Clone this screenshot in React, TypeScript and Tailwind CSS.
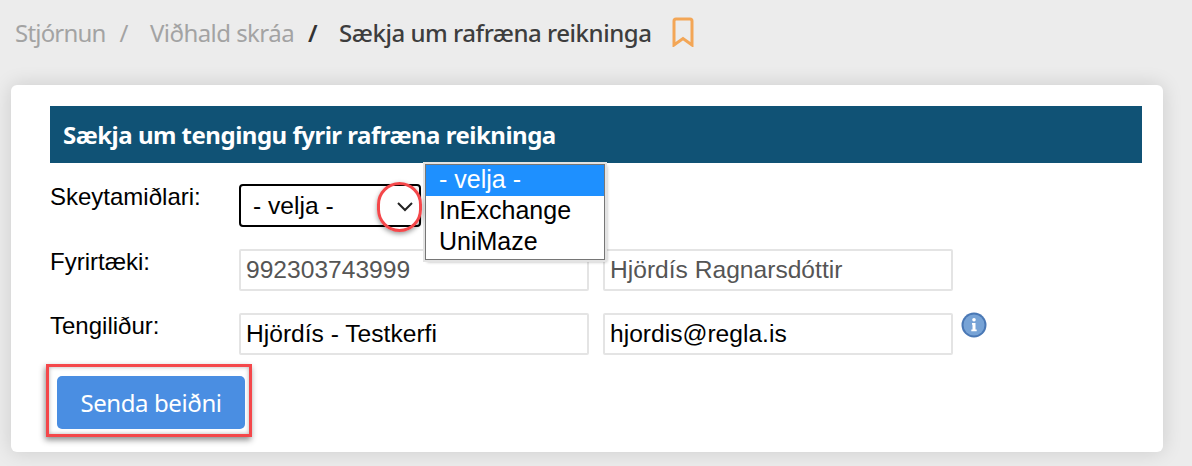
import React from 'react';

const segoe = { fontFamily: '"Noto Sans", sans-serif' };

const Field: React.FC<{ value: string; muted?: boolean }> = ({ value, muted }) => (
  <div
    className={`w-[350px] h-[42px] border-2 border-[#e4e4e4] rounded-[2px] flex items-center pl-[5px] text-[24.6px] ${
      muted ? 'text-[#555555]' : 'text-black'
    }`}
  >
    {value}
  </div>
);

const InfoIcon = () => (
  <svg width="26" height="26" viewBox="0 0 26 26">
    <circle cx="13" cy="13" r="12.5" fill="#4a78b5" />
    <circle cx="13" cy="13" r="10.5" fill="#77a3d6" />
    <circle cx="13" cy="7.800" r="1.800" fill="#ffffff" />
    <path d="M11 11h3.500v6.500h1.200v1.800h-5.400v-1.800h1.200v-4.700h-0.500z" fill="#ffffff" />
  </svg>
);

const App: React.FC = () => {
  return (
    <div className="w-[1192px] h-[466px] overflow-hidden bg-[#ececec] pl-[11px] pr-[29px]">
      {/* breadcrumb */}
      <div className="h-[85px] pl-1 pt-[17px] flex items-start text-[24px] tracking-[-0.55px] leading-[32px] text-[#a3a3a3]" style={segoe}>
        <span className="tracking-[-0.8px]">Stjórnun</span>
        <span className="ml-[14px]">/</span>
        <span className="ml-[22px]">Viðhald skráa</span>
        <span className="ml-[14px] text-[#333333] font-semibold">/</span>
        <span className="ml-[22px] text-[#3d3d3d] font-medium tracking-[-0.47px]">Sækja um rafræna reikninga</span>
        <svg className="ml-[21px]" width="22" height="30" viewBox="0 0 22 30" fill="none" stroke="#f3a656" strokeWidth="3">
          <path d="M2 28V4a2 2 0 0 1 2-2h14a2 2 0 0 1 2 2v24l-9-6.500z" />
        </svg>
      </div>

      {/* card */}
      <div className="relative h-[367px] bg-white rounded-[6px] shadow-[0_0_20px_rgba(0,0,0,0.14)] pl-[39px] pr-[21px] pt-[21px] font-['Liberation_Sans',sans-serif]">
        <div className="h-[57px] bg-[#105275] flex items-center pl-[13px] text-[24px] tracking-[-0.5px] font-bold text-white" style={segoe}>
          Sækja um tengingu fyrir rafræna reikninga
        </div>

        <div className="mt-[21px] flex items-start">
          <div className="w-[189px] text-[24px] leading-[26px] text-black">Skeytamiðlari:</div>
          <div className="w-[182px] h-[43px] border-2 border-black rounded-[4px] flex items-center justify-between pl-[12px] pr-[5px] text-[24.6px] text-black">
            <span className="pt-[2px]">- velja -</span>
            <svg width="18" height="18" viewBox="0 0 18 18" fill="none" stroke="#222222" strokeWidth="2">
              <path d="M2 6l7 7 7-7" />
            </svg>
          </div>
        </div>

        <div className="mt-[22px] flex items-start">
          <div className="w-[189px] text-[24px] leading-[26px] text-black">Fyrirtæki:</div>
          <div className="flex gap-[14px]">
            <Field value="992303743999" muted />
            <Field value="Hjördís Ragnarsdóttir" muted />
          </div>
        </div>

        <div className="mt-[22px] flex items-start">
          <div className="w-[189px] text-[24px] leading-[26px] text-black">Tengiliður:</div>
          <div className="flex gap-[14px]">
            <Field value="Hjördís - Testkerfi" />
            <Field value="hjordis@regla.is" />
          </div>
          <div className="ml-[8px] mt-[-1px]">
            <InfoIcon />
          </div>
        </div>

        <div className="mt-[9px] ml-[-4px] w-[206px] h-[73px] border-[3px] border-[#f4474a] shadow-[-1px_3px_6px_rgba(0,0,0,0.45),inset_0_0_4px_rgba(0,0,0,0.3)] pl-[8px] pt-[9px]">
          <button className="block w-[188px] h-[53px] bg-[#4a8ee2] rounded-[5px] text-white text-[24px] tracking-[-0.4px]" style={segoe}>
            Senda beiðni
          </button>
        </div>

        {/* open select list */}
        <div className="absolute left-[414px] top-[79px] w-[180px] h-[96px] bg-white border-[1.5px] border-[#767676] shadow-[0_0_0_2px_#e3e3e3,2px_2px_3px_rgba(0,0,0,0.3)] text-[25px] leading-[29px] text-black">
          <div className="h-[31px] bg-[#1e90ff] text-white pl-[13px]">- velja -</div>
          <div className="h-[31px] pl-[13px]">InExchange</div>
          <div className="h-[31px] pl-[13px]">UniMaze</div>
        </div>

        {/* red circle marker */}
        <div className="absolute left-[366px] top-[97px] w-[45px] h-[50px] rounded-full border-[3.5px] border-[#f4474a] shadow-[0_2px_5px_rgba(0,0,0,0.4)]" />
      </div>
    </div>
  );
};

export default App;
